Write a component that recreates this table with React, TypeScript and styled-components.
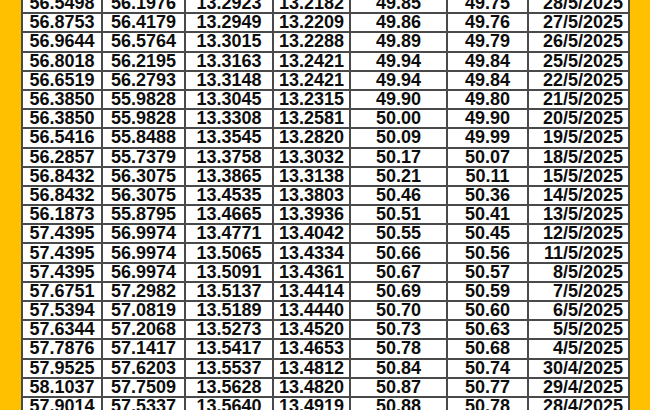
import styled, { createGlobalStyle } from "styled-components";

const GlobalStyle = createGlobalStyle`
  html, body {
    margin: 0;
    padding: 0;
    background: #ffc000;
  }
`;

const Page = styled.div`
  width: 650px;
  height: 410px;
  overflow: hidden;
  display: flex;
  padding-left: 21px;
  box-sizing: border-box;
  background: #ffc000;
`;

const Table = styled.table`
  margin-top: -7px;
  border-collapse: collapse;
  table-layout: fixed;
  width: 607px;
  height: fit-content;
  background: #ffffff;
  font-family: "Liberation Sans", Arial, sans-serif;
  font-weight: 700;
  font-size: 18px;
  color: #0d0d0d;
`;

const Row = styled.tr`
  height: 19.2px;
`;

const Cell = styled.td<{ $right?: boolean }>`
  border: 2px solid #4a4a4a;
  padding: 0 ${(p) => (p.$right ? "5px" : "0")} 0 0;
  text-align: ${(p) => (p.$right ? "right" : "center")};
  line-height: 17px;
  height: 17.2px;
  white-space: nowrap;
  overflow: hidden;
`;

const widths = [80, 83, 88, 77, 97, 81, 101];

const rows: string[][] = [
  ["56.5498", "56.1976", "13.2923", "13.2182", "49.85", "49.75", "28/5/2025"],
  ["56.8753", "56.4179", "13.2949", "13.2209", "49.86", "49.76", "27/5/2025"],
  ["56.9644", "56.5764", "13.3015", "13.2288", "49.89", "49.79", "26/5/2025"],
  ["56.8018", "56.2195", "13.3163", "13.2421", "49.94", "49.84", "25/5/2025"],
  ["56.6519", "56.2793", "13.3148", "13.2421", "49.94", "49.84", "22/5/2025"],
  ["56.3850", "55.9828", "13.3045", "13.2315", "49.90", "49.80", "21/5/2025"],
  ["56.3850", "55.9828", "13.3308", "13.2581", "50.00", "49.90", "20/5/2025"],
  ["56.5416", "55.8488", "13.3545", "13.2820", "50.09", "49.99", "19/5/2025"],
  ["56.2857", "55.7379", "13.3758", "13.3032", "50.17", "50.07", "18/5/2025"],
  ["56.8432", "56.3075", "13.3865", "13.3138", "50.21", "50.11", "15/5/2025"],
  ["56.8432", "56.3075", "13.4535", "13.3803", "50.46", "50.36", "14/5/2025"],
  ["56.1873", "55.8795", "13.4665", "13.3936", "50.51", "50.41", "13/5/2025"],
  ["57.4395", "56.9974", "13.4771", "13.4042", "50.55", "50.45", "12/5/2025"],
  ["57.4395", "56.9974", "13.5065", "13.4334", "50.66", "50.56", "11/5/2025"],
  ["57.4395", "56.9974", "13.5091", "13.4361", "50.67", "50.57", "8/5/2025"],
  ["57.6751", "57.2982", "13.5137", "13.4414", "50.69", "50.59", "7/5/2025"],
  ["57.5394", "57.0819", "13.5189", "13.4440", "50.70", "50.60", "6/5/2025"],
  ["57.6344", "57.2068", "13.5273", "13.4520", "50.73", "50.63", "5/5/2025"],
  ["57.7876", "57.1417", "13.5417", "13.4653", "50.78", "50.68", "4/5/2025"],
  ["57.9525", "57.6203", "13.5537", "13.4812", "50.84", "50.74", "30/4/2025"],
  ["58.1037", "57.7509", "13.5628", "13.4820", "50.87", "50.77", "29/4/2025"],
  ["57.9014", "57.5337", "13.5640", "13.4919", "50.88", "50.78", "28/4/2025"],
];

export default function App() {
  return (
    <>
      <GlobalStyle />
      <Page>
        <Table>
          <colgroup>
            {widths.map((w, i) => (
              <col key={i} style={{ width: w }} />
            ))}
          </colgroup>
          <tbody>
            {rows.map((r, i) => (
              <Row key={i}>
                {r.map((v, j) => (
                  <Cell key={j} $right={j === 6}>
                    {v}
                  </Cell>
                ))}
              </Row>
            ))}
          </tbody>
        </Table>
      </Page>
    </>
  );
}
